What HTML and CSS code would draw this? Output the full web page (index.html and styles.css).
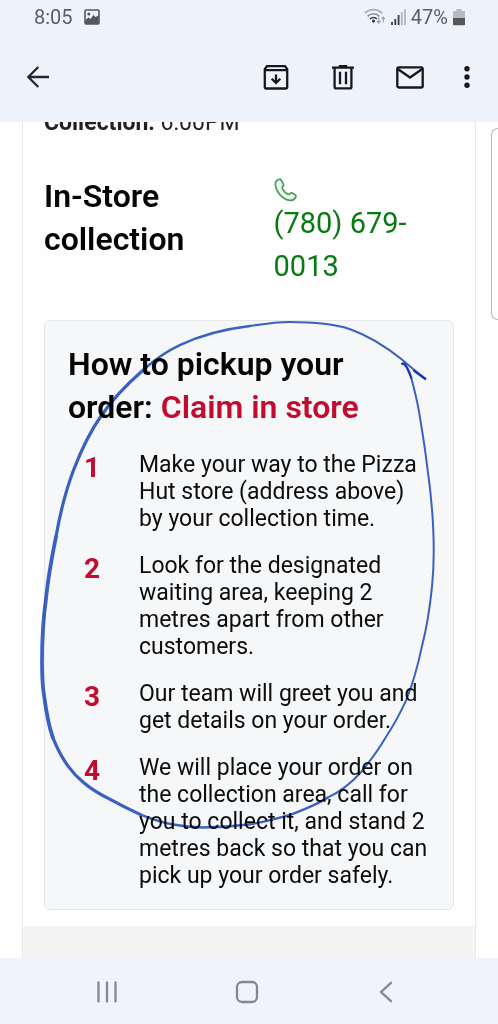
FILE: index.html
```html
<!DOCTYPE html>
<html lang="en">
<head>
<meta charset="utf-8">
<meta name="viewport" content="width=device-width, initial-scale=1">
<title>Order collection</title>
<link rel="stylesheet" href="styles.css">
</head>
<body>
<header class="top">
  <div class="status">
    <span class="status-text">8:05</span>
    <svg class="status-picture" width="16" height="16" viewBox="0 0 16 16" aria-hidden="true">
      <rect x="1" y="1" width="14" height="14" rx="1" fill="none" stroke="#55575d" stroke-width="1.6"/>
      <circle cx="4.8" cy="5" r="1.5" fill="#55575d"/>
      <path d="M1.500 11 4.500 8.500l2 1.500 3-4 2 2 3-1.500V15h-13z" fill="#55575d"/>
    </svg>
    <div class="status-right">
      <svg width="22" height="18" viewBox="0 0 22 18" aria-hidden="true">
        <g fill="none" stroke-width="1.700">
          <path d="M.8 5.200C5.500.4 13.500.4 18.200 5.200" stroke="#a9acb3"/>
          <path d="M3.600 8.300C7 4.900 12 4.900 15.400 8.300" stroke="#8d9096"/>
          <path d="M6.200 10.900C8 9.100 11 9.100 12.800 10.900" stroke="#3c3e43"/>
          <path d="M14.700 9.500v5.500M12.900 13l1.800 2 1.800-2M19.300 14.500V9.500M17.700 11l1.600-1.800L20.900 11" stroke="#a0a3a9" stroke-width="1.200"/>
        </g>
        <circle cx="9.500" cy="13" r="1.500" fill="#2b2d31"/>
      </svg>
      <svg width="15" height="18" viewBox="0 0 15 18" aria-hidden="true">
        <path d="M1 17v-3M4.300 17v-6M7.600 17V7" stroke="#3c3e43" stroke-width="1.800"/>
        <path d="M10.800 17V4M14 17V1" stroke="#b3b6bd" stroke-width="1.800"/>
      </svg>
      <span class="status-text">47%</span>
      <svg width="12" height="18" viewBox="0 0 12 18" aria-hidden="true">
        <path d="M3.500 1h5v2H12v7H0V3h3.500z" fill="#b7bac1"/>
        <path d="M0 10h12v6.500a.8.8 0 0 1-.8.8H.8a.8.8 0 0 1-.8-.8z" fill="#55575d"/>
      </svg>
    </div>
  </div>
  <div class="toolbar">
    <button class="icon-button" aria-label="Back">
      <svg width="24" height="24" viewBox="0 0 24 24"><path d="M23 12H2.500M12.300 2 2.300 12l10 10" fill="none" stroke="#252729" stroke-width="2.300"/></svg>
    </button>
    <div class="tools">
      <button class="icon-button" aria-label="Archive">
        <svg width="28" height="28" viewBox="0 0 28 28"><g fill="none" stroke="#17181a" stroke-width="2.300"><path d="M2.800 6.200 5 3.100h18l2.200 3.100V24a1.500 1.500 0 0 1-1.500 1.500H4.300A1.500 1.500 0 0 1 2.800 24zM3 7.200h22"/><path d="M14 11.500v8.500M9.700 15.800 14 20l4.300-4.200"/></g></svg>
      </button>
      <button class="icon-button" aria-label="Delete">
        <svg width="28" height="28" viewBox="0 0 28 28"><path d="M3 4.700h22M9.800 3.100h8.400M5.600 5v19a1.400 1.400 0 0 0 1.400 1.400h14a1.400 1.400 0 0 0 1.400-1.400V5M11 8.800v12.400M17 8.800v12.400" fill="none" stroke="#17181a" stroke-width="2.300"/></svg>
      </button>
      <button class="icon-button" aria-label="Mark unread">
        <svg width="28" height="28" viewBox="0 0 28 28"><g fill="none" stroke="#17181a" stroke-width="2.300"><rect x="1.300" y="4.300" width="25.400" height="20.200" rx="1.500"/><path d="M1.800 6 14 14.500 26.200 6"/></g></svg>
      </button>
      <button class="icon-button" aria-label="More options">
        <svg width="8" height="28" viewBox="0 0 8 28"><g fill="#17181a"><circle cx="4" cy="5.800" r="2.700"/><circle cx="4" cy="14" r="2.700"/><circle cx="4" cy="22.200" r="2.700"/></g></svg>
      </button>
    </div>
  </div>
</header>

<main class="viewport">
  <article class="message">
    <div class="message-body">
      <p class="slot"><strong>Collection:</strong> 6:00PM</p>
      <section class="store">
        <h2 class="title">In-Store collection</h2>
        <a class="phone" href="tel:+17806790013">
          <svg class="phone-icon" width="24" height="24" viewBox="0 0 24 24" aria-hidden="true"><path d="M5.400 1.300C3.200 1.800 1.300 3.800 1.400 6.400c.3 7.200 7.500 15.300 14.600 16 2.400.2 4.600-1.200 5.800-3.400.5-.9.200-1.600-.5-2.100l-3-1.800c-.8-.5-1.500-.3-2 .3-.7.8-1.500 1.400-2.500.9-2.400-1.200-4.400-3.500-5.500-6-.4-1 .1-1.700.8-2.300.6-.5.7-1.200.3-1.900L7.100 2C6.700 1.400 6.100 1.100 5.400 1.300z" fill="#eef8f0" stroke="#4b9f5b" stroke-width="1.700"/></svg>
          <span>(780) 679-0013</span>
        </a>
      </section>
      <section class="card">
        <h2 class="title">How to pickup your order: <span class="accent">Claim in store</span></h2>
        <ol class="steps">
          <li class="step"><span class="number">1</span><p class="step-text">Make your way to the Pizza Hut store (address above) by your collection time.</p></li>
          <li class="step"><span class="number">2</span><p class="step-text">Look for the designated waiting area, keeping 2 metres apart from other customers.</p></li>
          <li class="step"><span class="number">3</span><p class="step-text">Our team will greet you and get details on your order.</p></li>
          <li class="step"><span class="number">4</span><p class="step-text">We will place your order on the collection area, call for you to collect it, and stand 2 metres back so that you can pick up your order safely.</p></li>
        </ol>
        <svg class="ink" viewBox="44 321 410 589" aria-hidden="true">
          <g fill="none" stroke="#3c64c4" stroke-linecap="round" stroke-linejoin="round">
            <path stroke-width="2" d="M426 379C418 373 410 366 403 360C387 347 370 336 350 329C332 323 311 322 290 322C276 322 263 324 250 326"/>
            <path stroke-width="2.500" d="M250 326C225 329 201 335 180 345C167 351 154 360 143 370"/>
            <path stroke-width="3.200" d="M143 370C127 384 112 399 100 417C88 434 80 452 73 470C65 491 59 515 55 538"/>
            <path stroke-width="3.800" d="M55 538C51 558 47 579 45 600C42 621 41 642 41 663C41 675 41 686 43 697C45 712 47 726 52 740"/>
            <path stroke-width="3.200" d="M52 740C56 750 61 760 67 768C72 775 77 780 83 785C91 792 100 797 110 802C119 807 129 812 140 817"/>
            <path stroke-width="2.400" d="M140 817C150 821 161 825 173 827C183 829 193 830 203 830C218 830 233 829 248 827C263 825 277 821 291 817C304 812 317 807 328 800"/>
            <path stroke-width="2" d="M328 800C341 794 352 785 361 775C370 764 379 752 386 740C394 728 401 715 407 702C414 685 419 666 423 647C428 628 431 607 433 587C435 567 435 547 434 527C433 507 431 487 428 467C426 449 423 431 420 413C418 401 415 389 412 378"/>
            <path stroke="#1838b4" stroke-width="2.400" d="M412 378C410 372 408 367 405 364L403 364M426 379 415 371"/>
          </g>
        </svg>
      </section>
    </div>
    <div class="message-footer"></div>
  </article>
  <aside class="next-panel"></aside>
</main>

<nav class="system">
  <button class="icon-button" aria-label="Recent apps"><svg width="24" height="24" viewBox="0 0 24 24"><path d="M3.500 2.500v19M12 2.500v19M20.500 2.500v19" stroke="#85878d" stroke-width="2.300" stroke-linecap="round"/></svg></button>
  <button class="icon-button" aria-label="Home"><svg width="24" height="24" viewBox="0 0 24 24"><rect x="2" y="2" width="20" height="20" rx="5" fill="none" stroke="#85878d" stroke-width="2.300"/></svg></button>
  <button class="icon-button" aria-label="Back"><svg width="24" height="24" viewBox="0 0 24 24"><path d="M17 2.800 7 12l10 9.200" fill="none" stroke="#85878d" stroke-width="2.300" stroke-linecap="round"/></svg></button>
</nav>
</body>
</html>
```
FILE: styles.css
```css
* {
  box-sizing: border-box;
}

body {
  margin: 0;
  height: 100vh;
  display: flex;
  flex-direction: column;
  background: #fefefe;
  color: #0c0c0c;
  font-family: Roboto, "Liberation Sans", sans-serif;
}

h2,
p,
ol {
  margin: 0;
  padding: 0;
}

svg {
  display: block;
}

.top {
  background: #eef2fb;
  flex: none;
}

.status {
  display: flex;
  align-items: center;
  height: 34px;
  padding: 0 33px 0 34px;
}

.status-text {
  font-size: 20px;
  font-weight: 400;
  color: #5c5e64;
}

.status-picture {
  margin-left: 11px;
}

.status-right {
  display: flex;
  align-items: center;
  gap: 5px;
  margin-left: auto;
}

.icon-button {
  display: block;
  padding: 0;
  border: 0;
  background: none;
}

.toolbar {
  display: flex;
  align-items: center;
  justify-content: space-between;
  height: 88px;
  padding: 0 27px 2px 26px;
}

.tools {
  display: flex;
  align-items: center;
  gap: 39px;
}

.viewport {
  flex: 1;
  min-height: 0;
  overflow: hidden;
  display: grid;
  grid-template-columns: 1fr 7px;
  gap: 15px;
  padding-left: 22px;
}

.message {
  display: flex;
  flex-direction: column;
  border: solid #e8e8e8;
  border-width: 0 1px;
  min-height: 0;
}

.message-body {
  padding: 0 21px 16px;
}

.slot {
  margin-top: -14px;
  font-size: 23px;
  line-height: 30px;
  color: #222222;
}

.store {
  display: grid;
  grid-template-columns: 5fr 4fr;
  column-gap: 4px;
  margin-top: 37px;
}

.title {
  font-size: 32px;
  line-height: 43px;
  font-weight: 600;
  color: #050505;
}

.phone {
  display: block;
  font-size: 29px;
  line-height: 43px;
  color: #087a12;
  text-decoration: none;
}

.phone-icon {
  margin-top: 3px;
}

.card {
  position: relative;
  margin-top: 32px;
  padding: 22px 23px 20px;
  border: 1px solid #e5e7e9;
  border-radius: 6px;
  background: #f5f7f9;
}

.accent {
  color: #c10c30;
}

.steps {
  display: grid;
  gap: 20px;
  margin-top: 22px;
  list-style: none;
}

.step {
  display: grid;
  grid-template-columns: 48px 1fr;
  gap: 23px;
}

.number {
  font-size: 28px;
  line-height: 34px;
  font-weight: 700;
  text-align: center;
  color: #c10c30;
}

.step-text {
  font-size: 23px;
  line-height: 27px;
}

.ink {
  position: absolute;
  top: 0;
  left: 0;
  width: 100%;
  overflow: visible;
  mix-blend-mode: multiply;
  pointer-events: none;
}

.message-footer {
  flex: 1;
  background: #f4f4f4;
}

.next-panel {
  height: 192px;
  margin-top: 6px;
  border: 1px solid #b8b8b8;
  border-right: 0;
  border-radius: 8px 0 0 8px;
}

.system {
  flex: none;
  display: flex;
  align-items: center;
  justify-content: space-between;
  height: 66px;
  padding: 2px 100px 0 95px;
  background: #f0f3fd;
}
```
